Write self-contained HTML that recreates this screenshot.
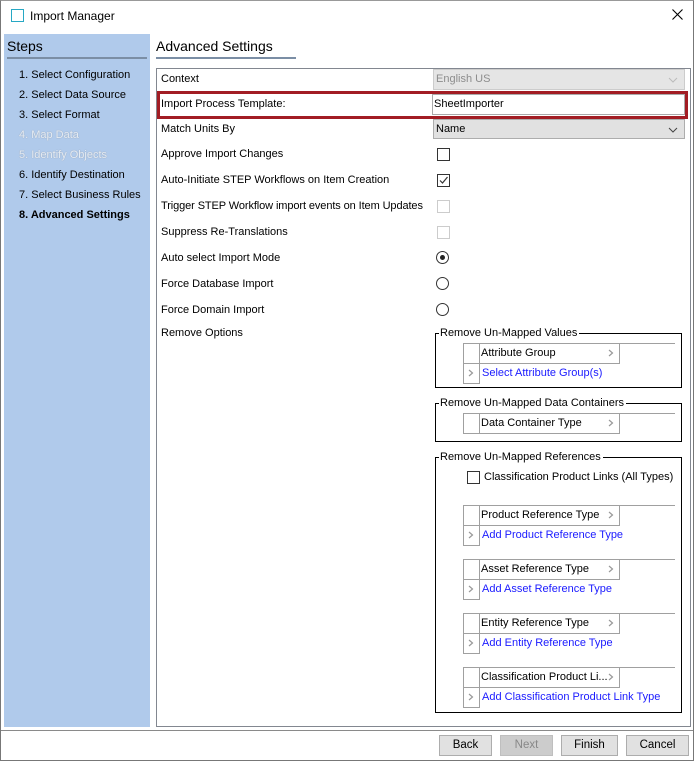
<!DOCTYPE html><html><head><style>
*{margin:0;padding:0;box-sizing:border-box}
body{width:694px;height:761px;position:relative;background:#fff;font-family:"Liberation Sans",sans-serif;font-size:11px;color:#000;overflow:hidden}
.a{position:absolute}
.t{position:absolute;white-space:nowrap;line-height:14px}
.cb{position:absolute;width:13px;height:13px;border:1px solid #333;background:#fff}
.cbd{border-color:#ccc}
.rd{position:absolute;width:13px;height:13px;border:1px solid #333;border-radius:50%;background:#fff}
.btn{position:absolute;top:735px;height:21px;border:1px solid #adadad;background:#e1e1e1;text-align:center;line-height:19px;font-size:11.5px}
.grp{position:absolute;border:1px solid #000}
.gl{position:absolute;top:-8px;left:3px;background:#fff;padding:0 2px 0 1px;line-height:14px;white-space:nowrap}
.cell{position:absolute;border:1px solid #a0a0a0;background:#fff}
.lnk{color:#1a1aff}
.arr{position:absolute;width:6px;height:8px}
</style></head><body>
<svg width="0" height="0" style="position:absolute"><defs><symbol id="ch" viewBox="0 0 6 8"><path d="M1 1 L4.5 4 L1 7" stroke="#999" fill="none" stroke-width="1.2"/></symbol><symbol id="dd" viewBox="0 0 10 6"><path d="M1 1 L5 5 L9 1" stroke="currentColor" fill="none" stroke-width="1"/></symbol></defs></svg>
<div class="a" style="left:0;top:0;width:694px;height:761px;border:1px solid #777;border-top-color:#999"></div>
<div class="a" style="left:11px;top:9px;width:13px;height:13px;border:1.5px solid #27a8c4"></div>
<div class="t" style="left:30px;top:9px;font-size:12px">Import Manager</div>
<svg class="a" style="left:672px;top:9px" width="11" height="11"><path d="M0.5 0.5 L10.5 10.5 M10.5 0.5 L0.5 10.5" stroke="#000" stroke-width="1.1"/></svg>
<div class="a" style="left:4px;top:34px;width:146px;height:693px;background:#b0caeb"></div>
<div class="t" style="left:7px;top:38px;font-size:14px;line-height:17px">Steps</div>
<div class="a" style="left:7px;top:57px;width:140px;height:2px;background:#7b8ea5"></div>
<div class="t" style="left:19px;top:68px">1. Select Configuration</div>
<div class="t" style="left:19px;top:88px">2. Select Data Source</div>
<div class="t" style="left:19px;top:108px">3. Select Format</div>
<div class="t" style="left:19px;top:128px;color:#e6ecf4;text-shadow:0 0 1px #8a95a3">4. Map Data</div>
<div class="t" style="left:19px;top:148px;color:#e6ecf4;text-shadow:0 0 1px #8a95a3">5. Identify Objects</div>
<div class="t" style="left:19px;top:168px">6. Identify Destination</div>
<div class="t" style="left:19px;top:188px">7. Select Business Rules</div>
<div class="t" style="left:19px;top:208px;font-weight:bold">8. Advanced Settings</div>
<div class="t" style="left:156px;top:38px;font-size:14px;line-height:17px">Advanced Settings</div>
<div class="a" style="left:156px;top:57px;width:140px;height:2px;background:#7b8ea5"></div>
<div class="a" style="left:156px;top:68px;width:535px;height:659px;border:1px solid #828790"></div>
<div class="a" style="left:433px;top:69px;width:252px;height:21px;background:#e5e5e5;border:1px solid #ccc"></div>
<div class="t" style="left:436px;top:72px;color:#8d8d8d">English US</div>
<svg class="a" style="left:668px;top:77px;color:#bbb" width="10" height="6"><use href="#dd"/></svg>
<div class="t" style="left:161px;top:72px">Context</div>
<div class="a" style="left:157px;top:91px;width:531px;height:28px;border:3px solid #a21d24"></div>
<div class="a" style="left:432px;top:94px;width:253px;height:21px;border:1px solid #aaa;background:#fff"></div>
<div class="t" style="left:434px;top:97px">SheetImporter</div>
<div class="t" style="left:161px;top:97px">Import Process Template:</div>
<div class="a" style="left:433px;top:119px;width:252px;height:20px;background:#e1e1e1;border:1px solid #adadad"></div>
<div class="t" style="left:436px;top:122px">Name</div>
<svg class="a" style="left:668px;top:127px;color:#444" width="10" height="6"><use href="#dd"/></svg>
<div class="t" style="left:161px;top:122px">Match Units By</div>
<div class="t" style="left:161px;top:147px">Approve Import Changes</div>
<div class="cb" style="left:437px;top:148px"></div>
<div class="t" style="left:161px;top:173px">Auto-Initiate STEP Workflows on Item Creation</div>
<div class="cb" style="left:437px;top:174px"><svg width="11" height="11" style="position:absolute;left:0;top:0"><path d="M2 5.5 L4.5 8 L9.5 2" stroke="#333" fill="none" stroke-width="1.2"/></svg></div>
<div class="t" style="left:161px;top:199px;letter-spacing:-0.1px">Trigger STEP Workflow import events on Item Updates</div>
<div class="cb cbd" style="left:437px;top:200px"></div>
<div class="t" style="left:161px;top:225px">Suppress Re-Translations</div>
<div class="cb cbd" style="left:437px;top:226px"></div>
<div class="t" style="left:161px;top:251px">Auto select Import Mode</div>
<div class="rd" style="left:436px;top:251px"><div class="a" style="left:3px;top:3px;width:5px;height:5px;border-radius:50%;background:#222"></div></div>
<div class="t" style="left:161px;top:277px">Force Database Import</div>
<div class="rd" style="left:436px;top:277px"></div>
<div class="t" style="left:161px;top:303px">Force Domain Import</div>
<div class="rd" style="left:436px;top:303px"></div>
<div class="t" style="left:161px;top:326px">Remove Options</div>

<div class="grp" style="left:435px;top:333px;width:247px;height:55px"><div class="gl">Remove Un-Mapped Values</div></div>
<div class="a" style="left:463px;top:343px;width:212px;height:1px;background:#a0a0a0"></div>
<div class="cell" style="left:463px;top:343px;width:17px;height:41px"></div>
<div class="cell" style="left:479px;top:343px;width:141px;height:21px"></div>
<div class="t" style="left:481px;top:346px">Attribute Group</div><svg class="arr" style="left:608px;top:349px"><use href="#ch"/></svg>
<div class="a" style="left:463px;top:363px;width:17px;height:1px;background:#a0a0a0"></div>
<svg class="arr" style="left:468px;top:369px"><use href="#ch"/></svg>
<div class="t lnk" style="left:482px;top:366px">Select Attribute Group(s)</div>

<div class="grp" style="left:435px;top:403px;width:247px;height:39px"><div class="gl">Remove Un-Mapped Data Containers</div></div>
<div class="a" style="left:463px;top:413px;width:212px;height:1px;background:#a0a0a0"></div>
<div class="cell" style="left:463px;top:413px;width:17px;height:21px"></div>
<div class="cell" style="left:479px;top:413px;width:141px;height:21px"></div>
<div class="t" style="left:481px;top:416px">Data Container Type</div><svg class="arr" style="left:608px;top:419px"><use href="#ch"/></svg>

<div class="grp" style="left:435px;top:457px;width:247px;height:256px"><div class="gl">Remove Un-Mapped References</div></div>
<div class="cb" style="left:467px;top:471px"></div>
<div class="t" style="left:484px;top:470px">Classification Product Links (All Types)</div>

<div class="a" style="left:463px;top:505px;width:212px;height:1px;background:#a0a0a0"></div>
<div class="cell" style="left:463px;top:505px;width:17px;height:41px"></div>
<div class="cell" style="left:479px;top:505px;width:141px;height:21px"></div>
<div class="a" style="left:463px;top:525px;width:17px;height:1px;background:#a0a0a0"></div>
<div class="t" style="left:481px;top:508px">Product Reference Type</div><svg class="arr" style="left:608px;top:511px"><use href="#ch"/></svg>
<svg class="arr" style="left:468px;top:531px"><use href="#ch"/></svg><div class="t lnk" style="left:482px;top:528px">Add Product Reference Type</div>

<div class="a" style="left:463px;top:559px;width:212px;height:1px;background:#a0a0a0"></div>
<div class="cell" style="left:463px;top:559px;width:17px;height:41px"></div>
<div class="cell" style="left:479px;top:559px;width:141px;height:21px"></div>
<div class="a" style="left:463px;top:579px;width:17px;height:1px;background:#a0a0a0"></div>
<div class="t" style="left:481px;top:562px">Asset Reference Type</div><svg class="arr" style="left:608px;top:565px"><use href="#ch"/></svg>
<svg class="arr" style="left:468px;top:585px"><use href="#ch"/></svg><div class="t lnk" style="left:482px;top:582px">Add Asset Reference Type</div>

<div class="a" style="left:463px;top:613px;width:212px;height:1px;background:#a0a0a0"></div>
<div class="cell" style="left:463px;top:613px;width:17px;height:41px"></div>
<div class="cell" style="left:479px;top:613px;width:141px;height:21px"></div>
<div class="a" style="left:463px;top:633px;width:17px;height:1px;background:#a0a0a0"></div>
<div class="t" style="left:481px;top:616px">Entity Reference Type</div><svg class="arr" style="left:608px;top:619px"><use href="#ch"/></svg>
<svg class="arr" style="left:468px;top:639px"><use href="#ch"/></svg><div class="t lnk" style="left:482px;top:636px">Add Entity Reference Type</div>

<div class="a" style="left:463px;top:667px;width:212px;height:1px;background:#a0a0a0"></div>
<div class="cell" style="left:463px;top:667px;width:17px;height:41px"></div>
<div class="cell" style="left:479px;top:667px;width:141px;height:21px"></div>
<div class="a" style="left:463px;top:687px;width:17px;height:1px;background:#a0a0a0"></div>
<div class="t" style="left:481px;top:670px">Classification Product Li...</div><svg class="arr" style="left:608px;top:673px"><use href="#ch"/></svg>
<svg class="arr" style="left:468px;top:693px"><use href="#ch"/></svg><div class="t lnk" style="left:482px;top:690px">Add Classification Product Link Type</div>

<div class="a" style="left:1px;top:730px;width:692px;height:1px;background:#8a8a8a"></div>
<div class="btn" style="left:439px;width:53px">Back</div>
<div class="btn" style="left:500px;width:53px;background:#ccc;border-color:#bfbfbf;color:#888">Next</div>
<div class="btn" style="left:561px;width:57px">Finish</div>
<div class="btn" style="left:626px;width:63px">Cancel</div>
</body></html>
